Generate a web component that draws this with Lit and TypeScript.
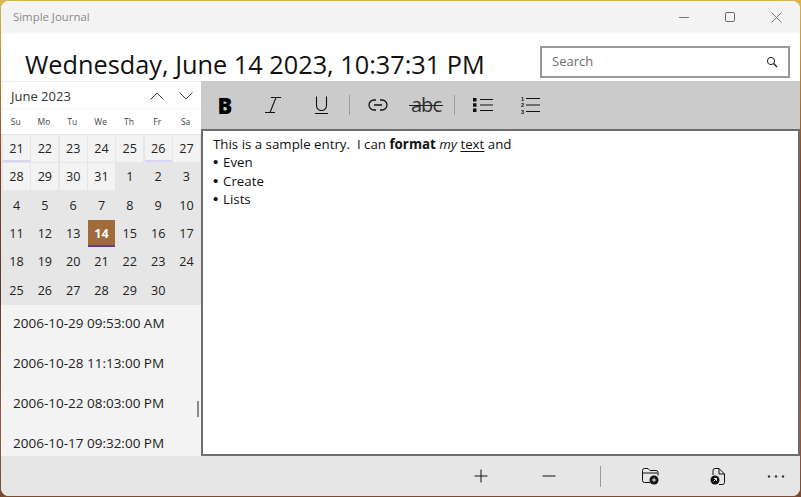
import { LitElement, html, css, svg } from "lit";
import { customElement } from "lit/decorators.js";

@customElement("app-root")
export class AppRoot extends LitElement {
  static styles = css`
    :host {
      display: block;
      width: 801px;
      height: 497px;
      overflow: hidden;
      background: linear-gradient(180deg, #d9b64a 0%, #c58a3a 12%, #7d3f22 35%, #5c3a2e 60%, #9a5a36 85%, #7a4a32 100%);
      font-family: "Open Sans", "Noto Sans", sans-serif;
      color: #111;
    }
    .win {
      margin: 1px;
      height: 495px;
      width: 799px;
      border-radius: 8px;
      overflow: hidden;
      background: #fff;
      display: flex;
      flex-direction: column;
    }
    .title {
      height: 32px;
      flex: none;
      background: #f3f3f3;
      display: flex;
      align-items: center;
      padding-left: 12px;
      font-size: 11.4px;
      color: #8a8a8a;
    }
    .title .name { flex: 1; margin-top: -1px; }
    .wbtn { width: 46px; height: 32px; display: flex; align-items: center; justify-content: center; }
    .wbtn.close { margin-right: 1px; }
    .header {
      height: 48px;
      flex: none;
      display: flex;
      align-items: flex-start;
      justify-content: space-between;
      box-sizing: border-box;
      padding: 13px 10px 0 24px;
    }
    .date { font-size: 25.3px; line-height: 36px; color: #111; white-space: nowrap; }
    .search {
      width: 250px;
      height: 32px;
      box-sizing: border-box;
      border: 2px solid #999;
      display: flex;
      align-items: center;
      justify-content: space-between;
      padding: 0 10px 2px;
      font-size: 13px;
      color: #6e6e6e;
      background: #fff;
    }
    .search svg { color: #222; margin-top: 2px; }
    .body { flex: 1; display: flex; min-height: 0; }
    .side { width: 200px; flex: none; display: flex; flex-direction: column; }
    .mhead {
      height: 27px;
      flex: none;
      display: flex;
      align-items: center;
      padding: 2px 0 0 10px;
      font-size: 13px;
      color: #333;
      background: #fff;
      border-top: 1px solid #eee;
      box-sizing: border-box;
    }
    .mhead .m { flex: 1; }
    .chev { width: 29px; display: flex; justify-content: center; color: #444; margin-left: -1px; margin-right: 1px; }
    .dow {
      height: 26px;
      flex: none;
      display: grid;
      grid-template-columns: repeat(7, 28.33px);
      align-items: center;
      padding-left: 0.5px;
      font-size: 8.5px;
      color: #444;
      background: #fff;
      border-top: 1px solid #f3f3f3;
      box-sizing: border-box;
      justify-items: center;
    }
    .grid {
      flex: none;
      height: 171px;
      background: #e6e6e6;
      display: grid;
      grid-template-columns: repeat(7, 27px);
      grid-auto-rows: 27px;
      gap: 1.33px;
      padding: 1px 0 0 2px;
      box-sizing: border-box;
    }
    .cell {
      display: flex;
      align-items: center;
      justify-content: center;
      font-size: 12.6px;
      color: #222;
      position: relative;
    }
    .cell.prev { background: #f3f3f3; }
    .cell.mark::after {
      content: "";
      position: absolute;
      left: 0;
      right: 0;
      bottom: 0;
      height: 2px;
      background: #d6d6f4;
    }
    .cell.today {
      background: #a06a3a;
      color: #fff;
      font-weight: 700;
    }
    .cell.today::after {
      content: "";
      position: absolute;
      left: 0;
      right: 0;
      bottom: 0;
      height: 2px;
      background: #6b3f8e;
    }
    .list {
      flex: 1;
      min-height: 0;
      overflow: hidden;
      background: #f3f3f3;
      position: relative;
      padding-left: 12px;
      font-size: 13.5px;
      color: #222;
    }
    .rows { margin-top: -2px; }
    .row { height: 40px; display: flex; align-items: center; white-space: nowrap; }
    .thumb {
      position: absolute;
      right: 2px;
      top: 96px;
      width: 2px;
      height: 16px;
      background: #8a8a8a;
    }
    .main { flex: 1; display: flex; flex-direction: column; min-width: 0; }
    .tools {
      height: 48px;
      flex: none;
      background: #cbcbcb;
      display: flex;
      align-items: center;
      color: #111;
      padding-left: 1px;
    }
    .t { display: flex; align-items: center; justify-content: center; flex: none; height: 48px; }
    .b { font-weight: 800; font-size: 22px; width: 46px; color: #000; }
    .w49 { width: 49px; }
    .w56 { width: 56px; }
    .w40 { width: 40px; }
    .w38 { width: 38px; }
    .vsep { width: 1px; height: 20px; background: #9c9c9c; flex: none; }
    .vsep.a { margin-left: 3px; }
    .vsep.b2 { margin-left: 8px; }
    .abc { font-size: 20px; position: relative; color: #333; line-height: 1; letter-spacing: -0.9px; }
    .abc::after {
      content: "";
      position: absolute;
      left: -2px;
      right: -2px;
      top: 50%;
      height: 1px;
      background: #222;
    }
    .nums { font-size: 5.5px; font-weight: 700; font-family: "Liberation Sans", sans-serif; fill: #111; stroke: none; }
    .editor {
      flex: 1;
      box-sizing: border-box;
      border: 2px solid #6d6d6d;
      background: #fff;
      padding: 4px 10px;
      font-size: 13.3px;
      line-height: 18.4px;
      color: #111;
    }
    .editor u { text-underline-offset: 2px; }
    .dot { font-family: "Liberation Sans", sans-serif; font-size: 15px; line-height: 14px; display: inline-block; width: 10px; }
    .bar {
      height: 40px;
      flex: none;
      background: #e6e6e6;
      display: flex;
      align-items: center;
    }
    .bi { flex: none; display: flex; align-items: center; justify-content: center; }
    .fill { width: 459px; flex: none; }
    .sep2 { width: 1px; height: 21px; background: #9a9a9a; flex: none; margin-left: 5px; }
    .plus { width: 42px; }
    .minus { width: 93px; }
    .folder { width: 99px; }
    .file { width: 35px; }
    .more { width: 82px; color: #333; }
    svg { display: block; }
  `;

  private cells() {
    const prev = [21, 22, 23, 24, 25, 26, 27, 28, 29, 30, 31];
    const out = prev.map((d, i) => html`<div class="cell prev ${i === 0 || i === 5 ? "mark" : ""}">${d}</div>`);
    for (let d = 1; d <= 30; d++) {
      out.push(html`<div class="cell ${d === 14 ? "today" : ""}">${d}</div>`);
    }
    return out;
  }

  private ic(w: number, h: number, body: unknown) {
    return html`<svg width=${w} height=${h} viewBox="0 0 ${w} ${h}" fill="none" stroke="currentColor" stroke-width="1">${body}</svg>`;
  }

  render() {
    return html`
      <div class="win">
        <div class="title">
          <span class="name">Simple Journal</span>
          <div class="wbtn">${this.ic(10, 10, svg`<path d="M0 5.500H10" stroke="#777"/>`)}</div>
          <div class="wbtn">${this.ic(10, 10, svg`<rect x=".5" y=".5" width="9" height="9" rx="1.2" stroke="#666"/>`)}</div>
          <div class="wbtn close">${this.ic(11, 11, svg`<path d="M.5.5l10 10M10.500.5l-10 10" stroke="#777"/>`)}</div>
        </div>
        <div class="header">
          <div class="date">Wednesday, June 14 2023, 10:37:31 PM</div>
          <div class="search">
            <span>Search</span>
            ${this.ic(12, 12, svg`<circle cx="5" cy="5" r="3.6"/><path d="M7.600 7.600L11 11" stroke-width="1.400"/>`)}
          </div>
        </div>
        <div class="body">
          <div class="side">
            <div class="mhead">
              <span class="m">June 2023</span>
              <span class="chev">${this.ic(14, 8, svg`<path d="M.5 7.500L7 1l6.500 6.500"/>`)}</span>
              <span class="chev">${this.ic(14, 8, svg`<path d="M.5.500L7 7l6.500-6.500"/>`)}</span>
            </div>
            <div class="dow">
              ${["Su", "Mo", "Tu", "We", "Th", "Fr", "Sa"].map((d) => html`<span>${d}</span>`)}
            </div>
            <div class="grid">${this.cells()}</div>
            <div class="list">
              <div class="rows">
                <div class="row">2006-10-29 09:53:00 AM</div>
                <div class="row">2006-10-28 11:13:00 PM</div>
                <div class="row">2006-10-22 08:03:00 PM</div>
                <div class="row">2006-10-17 09:32:00 PM</div>
              </div>
              <div class="thumb"></div>
            </div>
          </div>
          <div class="main">
            <div class="tools">
              <div class="t b">B</div>
              <div class="t w49">${this.ic(18, 18, svg`<path d="M7 1.500h10M1 16.500h10M12 1.500L6 16.500" stroke-width="1.100"/>`)}</div>
              <div class="t w49">${this.ic(15, 18, svg`<path d="M2.500 .5v9a5 5 0 0 0 10 0v-9M1 17.500h13" stroke-width="1.100"/>`)}</div>
              <div class="vsep a"></div>
              <div class="t w56">${this.ic(20, 12, svg`<path d="M8 1H6a5 5 0 0 0 0 10h2M12 1h2a5 5 0 0 1 0 10h-2M6 6h8" stroke-width="1.300"/>`)}</div>
              <div class="t w40"><span class="abc">abc</span></div>
              <div class="vsep b2"></div>
              <div class="t w56">${this.ic(20, 14, svg`<path d="M7 1.500h13M7 7h13M7 12.500h13" stroke-width="1.200"/><rect x="0" y="0" width="3.500" height="3.500" fill="currentColor" stroke="none"/><rect x="0" y="5.250" width="3.500" height="3.500" fill="currentColor" stroke="none"/><rect x="0" y="10.500" width="3.500" height="3.500" fill="currentColor" stroke="none"/>`)}</div>
              <div class="t w38">${this.ic(20, 22, svg`<path d="M6 4.500h14M6 11h14M6 17.500h14" stroke-width="1.200"/><text class="nums" x="1" y="7">1</text><text class="nums" x="1" y="13.400">2</text><text class="nums" x="1" y="19.800">3</text>`)}</div>
            </div>
            <div class="editor">
              <div>This is a sample entry.&nbsp; I can <b>format</b> <i>my</i> <u>text</u> and</div>
              <div><span class="dot">•</span>Even</div>
              <div><span class="dot">•</span>Create</div>
              <div><span class="dot">•</span>Lists</div>
            </div>
          </div>
        </div>
        <div class="bar">
          <div class="fill"></div>
          <div class="bi plus">${this.ic(14, 14, svg`<path d="M7 .5v13M.5 7h13"/>`)}</div>
          <div class="bi minus">${this.ic(14, 14, svg`<path d="M.5 7h13"/>`)}</div>
          <div class="sep2"></div>
          <div class="bi folder">${this.ic(17, 17, svg`<path d="M8 14.500H2.500a2 2 0 0 1-2-2v-10a2 2 0 0 1 2-2h3.500l2 2h6a2 2 0 0 1 2 2v3M.5 5h15"/><circle cx="12" cy="12" r="4.500" fill="currentColor" stroke="none"/><path d="M12 9.800v4.400M9.800 12h4.400" stroke="#e6e6e6"/>`)}</div>
          <div class="bi file">${this.ic(15, 17, svg`<path d="M3 7V2.500a2 2 0 0 1 2-2h4l5.500 5.500v8.500a2 2 0 0 1-2 2H9M9 .5V6h5.500"/><circle cx="5" cy="12" r="4.500" fill="currentColor" stroke="none"/><path d="M3.500 13.500l3-3M4 10.500h2.500V13" stroke="#e6e6e6"/>`)}</div>
          <div class="bi more">${this.ic(18, 3, svg`<circle cx="2" cy="1.500" r="1.200" fill="currentColor" stroke="none"/><circle cx="9" cy="1.500" r="1.200" fill="currentColor" stroke="none"/><circle cx="16" cy="1.500" r="1.200" fill="currentColor" stroke="none"/>`)}</div>
        </div>
      </div>
    `;
  }
}
